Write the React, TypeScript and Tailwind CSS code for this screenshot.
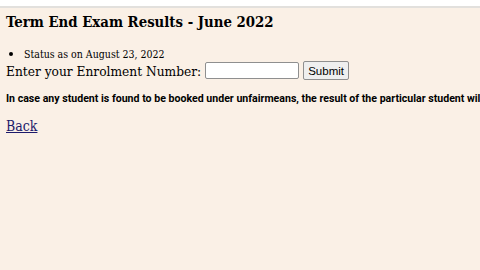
export default function App() {
  return (
    <div className="w-[480px] h-[270px] overflow-hidden bg-white">
      <div className="h-[6px] bg-white" />
      <div className="h-[2px] bg-[#e2e0dd]" />
      <div className="h-[262px] bg-[#faf0e6] px-[6px] pt-[4px] text-black [font-family:'DejaVu_Serif',serif] [font-stretch:condensed]">
        <h1 className="text-[14.8px] font-bold leading-[20px]">Term End Exam Results - June 2022</h1>

        <ul className="mt-[15px] list-disc pl-[18px] text-[10.5px] leading-[14px] marker:text-[13px]">
          <li>Status as on August 23, 2022</li>
        </ul>

        <div className="flex items-center gap-[4px] text-[13.6px] leading-[16px]">
          <span>Enter your Enrolment Number:</span>
          <input
            type="text"
            className="w-[94px] h-[17px] border border-[#8f8f8f] rounded-[2px] bg-white"
          />
          <button className="h-[19px] px-[4px] border border-[#8f8f8f] rounded-[2px] bg-[#efefef] text-[11.5px] [font-family:'Liberation_Sans',sans-serif] [font-stretch:normal]">
            Submit
          </button>
        </div>

        <p className="mt-[12px] whitespace-nowrap text-[10.6px] font-bold leading-[14px] [font-family:Roboto,sans-serif] [font-stretch:normal]">
          In case any student is found to be booked under unfairmeans, the result of the particular student will be withheld.
        </p>

        <a href="#" className="mt-[10px] inline-block text-[14px] leading-[20px] text-[#1c1a6b] underline">
          Back
        </a>
      </div>
    </div>
  );
}
